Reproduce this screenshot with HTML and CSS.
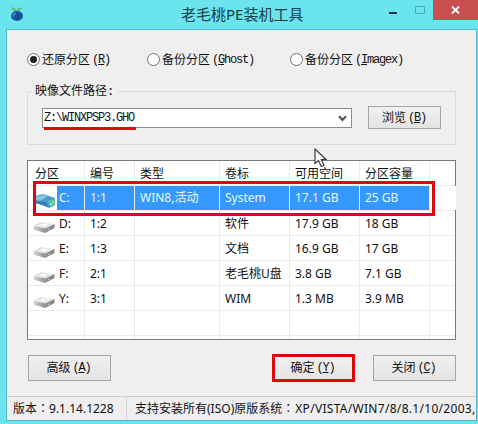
FILE: index.html
```html
<!DOCTYPE html>
<html lang="zh-CN">
<head>
<meta charset="utf-8">
<title>老毛桃PE装机工具</title>
<link rel="stylesheet" href="styles.css">
</head>
<body>
<svg width="0" height="0" class="defs" aria-hidden="true">
  <defs>
    <linearGradient id="top" x1="0" y1="0" x2="1" y2="1"><stop offset="0" stop-color="#c9c9c9"/><stop offset=".55" stop-color="#ececec"/><stop offset="1" stop-color="#bdbdbd"/></linearGradient>
    <linearGradient id="side" x1="0" y1="0" x2="1" y2="0"><stop offset="0" stop-color="#d5d5d5"/><stop offset="1" stop-color="#8c8c8c"/></linearGradient>
    <symbol id="drive" viewBox="0 0 23 14">
      <path d="M.5 6 8 2.2 21.5 4 13 8.5Z" fill="url(#top)"/>
      <path d="M.5 6 13 8.5 12 13 1 9.8Z" fill="url(#side)"/>
      <path d="M13 8.5 21.5 4V8L12 13Z" fill="#858585"/>
      <path d="M5 5.5 10 3.3 16 4.4 11 6.8Z" fill="#f7f7f7"/>
      <path d="M14.5 10 17 8.7" stroke="#ccc"/>
    </symbol>
  </defs>
</svg>
<div class="window">
  <header class="titlebar">
    <svg class="logo" width="14" height="17" viewBox="0 0 14 17">
      <path d="M6 6C4 5 2 4 1 1.5 4 1 6 3 6.5 5 7 3 9 1 12 1.5 11 4 9 5.5 6 6Z" fill="#65b878"/>
      <ellipse cx="7" cy="10" rx="6" ry="5" fill="#17559f"/>
      <path d="M2 9Q6 4 8 7 4 8 3 12Z" fill="#3487c6"/>
      <path d="M6 6Q10 9 8 13" stroke="#0b397a" fill="none"/>
    </svg>
    <h1>老毛桃PE装机工具</h1>
    <div class="controls">
      <svg class="minmax" width="38" height="20" viewBox="0 0 38 20"><path d="M2 13H10" stroke="#1b3438" stroke-width="2"/><path d="M28.5 6.5H37.5V13.5H28.5Z" fill="none" stroke="#3faab0"/></svg>
      <div class="close"><svg width="9" height="8" viewBox="0 0 9 8"><path d="M1 .5 8 7.5M8 .5 1 7.5" stroke="#fff" stroke-width="1.8"/></svg></div>
    </div>
  </header>
  <main class="client">
    <div class="modes">
      <label class="mode"><i class="radio on"></i>还原分区<span class="m key">(<u>R</u>)</span></label>
      <label class="mode"><i class="radio"></i>备份分区<span class="m key">(<u>G</u>host)</span></label>
      <label class="mode"><i class="radio"></i>备份分区<span class="m key">(<u>I</u>magex)</span></label>
    </div>
    <section class="group">
      <div class="legend">映像文件路径<span class="m">:</span></div>
      <div class="combo"><span class="path">Z:\WINXPSP3.GHO</span><svg width="9" height="7" viewBox="0 0 9 7"><path d="M1 1.3 4.5 5 8 1.3" fill="none" stroke="#505050" stroke-width="2"/></svg></div>
      <div class="btn browse">浏览<span class="m key">(<u>B</u>)</span></div>
    </section>
    <div class="list">
      <div class="row head"><div>分区</div><div>编号</div><div>类型</div><div>卷标</div><div>可用空间</div><div>分区容量</div><div></div></div>
      <div class="row sel"><div><svg class="disk" width="21" height="15" viewBox="0 0 21 15"><path d="M0 3 8 1 20 5V12L14 15 0 9Z" fill="#459bcb"/><path d="M0 4 8 2 13 3 5 8 0 7Z" fill="#83c4dd"/><path d="M2 8 10 9 14 14 0 10Z" fill="#367caf"/><path d="M13 7 20 6V12L15 14Z" fill="#56bda9"/><path d="M14 10 16 12 19 8" stroke="#b5edcf" fill="none"/></svg><span>C:</span></div><div>1:1</div><div>WIN8,活动</div><div>System</div><div>17.1 GB</div><div>25 GB</div><div></div></div>
      <div class="row"><div><svg class="disk" width="23" height="14"><use href="#drive"/></svg><span>D:</span></div><div>1:2</div><div></div><div>软件</div><div>17.9 GB</div><div>18 GB</div><div></div></div>
      <div class="row"><div><svg class="disk" width="23" height="14"><use href="#drive"/></svg><span>E:</span></div><div>1:3</div><div></div><div>文档</div><div>16.9 GB</div><div>17 GB</div><div></div></div>
      <div class="row"><div><svg class="disk" width="23" height="14"><use href="#drive"/></svg><span>F:</span></div><div>2:1</div><div></div><div>老毛桃U盘</div><div>3.8 GB</div><div>7.1 GB</div><div></div></div>
      <div class="row"><div><svg class="disk" width="23" height="14"><use href="#drive"/></svg><span>Y:</span></div><div>3:1</div><div></div><div>WIM</div><div>1.3 MB</div><div>3.9 MB</div><div></div></div>
      <div class="row"><div></div><div></div><div></div><div></div><div></div><div></div><div></div></div>
      <div class="row rest"><div></div><div></div><div></div><div></div><div></div><div></div><div></div></div>
      <div class="highlight"></div>
      <svg class="cursor" width="14" height="20" viewBox="0 0 14 20"><path d="M1 1V15.5L4.5 12.5 7.3 18.5 10 17.2 7.3 11.5H12Z" fill="#fff" stroke="#333c48" stroke-width="1.2"/></svg>
    </div>
    <div class="actions">
      <div class="btn adv">高级<span class="m key">(<u>A</u>)</span></div>
      <div class="btn ok">确定<span class="m key">(<u>Y</u>)</span></div>
      <div class="btn shut">关闭<span class="m key">(<u>C</u>)</span></div>
    </div>
    <footer class="status"><div class="ver">版本<span class="colon" lang="zh-TW">：</span>9.1.14.1228</div><div class="sys">支持安装所有(ISO)原版系统<span class="colon" lang="zh-TW">：</span><span class="systems">XP/VISTA/WIN7/8/8.1/10/2003,</span></div></footer>
  </main>
</div>
</body>
</html>
```
FILE: styles.css
```css
* { box-sizing: border-box; }
body { margin: 0; overflow: hidden; font: 12px/16px "Noto Sans", "Noto Sans CJK SC", sans-serif; color: #111; }
.defs { position: absolute; }
.window { width: 478px; height: 424px; background: #6ae4ed; display: flex; flex-direction: column; }
.titlebar { height: 29px; display: flex; align-items: flex-start; flex: none; }
.logo { margin: 6px 0 0 10px; }
h1 { margin: 4px 0 0 157px; font-size: 15px; line-height: 21px; font-weight: 400; color: #173f45; white-space: nowrap; width: 125px; }
.controls { display: flex; margin-left: auto; }
.minmax { margin-right: 8px; }
.close { width: 45px; height: 20px; background: #c9504f; display: flex; align-items: center; justify-content: center; }
.client { margin: 0 1px 0 6px; height: 392px; background: #efefef; border: 1px solid #55b9c2; display: flex; flex-direction: column; }
.m { font: 12px/14px "Liberation Mono", monospace; letter-spacing: -1.2px; }
.key { margin-left: 2px; }
u { text-underline-offset: 1px; }

.modes { display: grid; grid-template-columns: 120px 143px 150px; padding: 22px 0 0 20px; height: 54px; }
.mode { display: flex; height: 15px; align-items: center; white-space: nowrap; }
.radio { width: 13px; height: 13px; border: 1px solid #707070; border-radius: 50%; background: #fff; margin-right: 2px; display: flex; flex: none; align-items: center; justify-content: center; }
.radio.on::after { content: ""; width: 7px; height: 7px; border-radius: 50%; background: #222; }

.group { margin: 7px 20px 0; height: 54px; border: 1px solid #dadada; display: flex; }
.legend { height: 16px; margin-top: -9px; margin-left: 4px; padding: 0 3px; background: #efefef; width: 86px; flex: none; white-space: nowrap; }
.combo { margin: 16px 0 0 -76px; width: 310px; height: 20px; border: 1px solid #8c8c8c; background: #fff; display: flex; align-items: center; justify-content: space-between; padding-right: 4px; }
.path { font: 12px/17px "Liberation Mono", monospace; letter-spacing: -1.2px; border-bottom: 3px solid #dd0d13; height: 20px; margin: 1px 0 0 1px; padding-left: 0; width: 92px; align-self: flex-start; white-space: nowrap; }
.btn { border: 1px solid #a5a5a5; background: linear-gradient(#f0f0f0, #e4e4e4); display: flex; align-items: center; justify-content: center; white-space: nowrap; }
.browse { margin: 14px 0 0 16px; width: 73px; height: 23px; padding-right: 1px; }

.list { position: relative; margin: 15px 20px 0; height: 180px; border: 1px solid #787878; background: #fff; flex: none; }
.row { display: grid; grid-template-columns: 57px 50px 85px 70px 70px 70px 26px; height: 25px; border-bottom: 1px solid #ebebeb; }
.row > div { border-right: 1px solid #ebebeb; padding: 5px 0 0 5px; white-space: nowrap; height: 24px; }
.row > div:first-child { display: flex; }
.row > div:last-child { border: 0; }
.disk { flex: none; width: 23px; margin: 4px 3px 0 0; }
.row.head > div:first-child { padding-left: 7px; }
.row.sel { color: #e5faff; }
.row.sel > div { background: #3598fe; padding-top: 4px; }
.row.sel > div:first-child { background: linear-gradient(90deg, #fff 29px, #3598fe 29px); padding-left: 7px; }
.row.sel > div:last-child { background: #fff; }
.row.sel .disk { width: 21px; margin-top: 3px; }
.row.rest { height: 3px; border: 0; }
.row.rest > div { height: 3px; padding: 0; }
.highlight { position: absolute; left: 5px; top: 20px; width: 402px; height: 35px; border: 3px solid #de070e; }
.cursor { position: absolute; left: 286px; top: -13px; }

.actions { display: flex; padding: 15px 20px 0 21px; height: 56px; }
.actions .btn { height: 26px; width: 83px; padding-right: 2px; }
.actions .ok { margin: -1px 18px 0 161px; height: 28px; border: 3px solid #de070e; }
.status { height: 24px; border-top: 1px solid #cecece; display: flex; overflow: hidden; white-space: nowrap; line-height: 23px; }
.ver { width: 120px; padding-left: 6px; border-right: 1px solid #d4d4d4; flex: none; }
.sys { padding-left: 8px; }
.colon { font-family: "Noto Sans CJK TC", sans-serif; line-height: 1; }
.systems { letter-spacing: .3px; margin-left: 1px; }
```
